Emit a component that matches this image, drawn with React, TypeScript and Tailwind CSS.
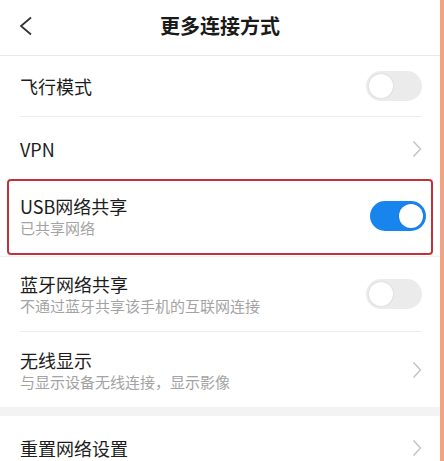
import React, { useState } from 'react';

const font = { fontFamily: '"Noto Sans CJK SC", "Noto Sans", sans-serif' };

interface ToggleProps {
  on: boolean;
  onChange: () => void;
}

const Toggle: React.FC<ToggleProps> = ({ on, onChange }) => (
  <button
    onClick={onChange}
    className={`relative h-[30px] w-[56px] shrink-0 rounded-full transition-colors ${on ? 'bg-[#1884ee]' : 'bg-[#ebebeb]'}`}
  >
    <span
      className={`absolute top-[3px] h-[24px] w-[24px] rounded-full bg-white shadow-[0_0_2px_rgba(0,0,0,0.15)] transition-all ${on ? 'left-[29px]' : 'left-[3px]'}`}
    />
  </button>
);

const Chevron = () => (
  <svg width="10" height="18" viewBox="0 0 10 18" className="shrink-0">
    <polyline points="1.5,1.5 8.5,9 1.5,16.5" fill="none" stroke="#c2c2c2" strokeWidth="1.4" />
  </svg>
);

interface RowProps {
  title: string;
  sub?: string;
  right: React.ReactNode;
  className?: string;
}

const Row: React.FC<RowProps> = ({ title, sub, right, className = '' }) => (
  <div className={`flex shrink-0 items-center justify-between ${className}`}>
    <div className="flex flex-col">
      <span className="text-[18px] leading-[24px] text-[#1c1c1c]">{title}</span>
      {sub && <span className="text-[15px] leading-[20px] text-[#a3a3a3]">{sub}</span>}
    </div>
    {right}
  </div>
);

export default function App() {
  const [airplane, setAirplane] = useState(false);
  const [usb, setUsb] = useState(true);
  const [bt, setBt] = useState(false);

  return (
    <div className="flex h-[461px] w-[444px] overflow-hidden bg-white" style={font}>
      <div className="flex flex-1 flex-col">
        {/* Header */}
        <div className="grid h-[56px] shrink-0 grid-cols-[60px_1fr_60px] items-center border-b border-[#e9e9e9] pb-[3px]">
          <svg width="14" height="20" viewBox="0 0 14 20" className="ml-[19px]">
            <polyline points="12,1.5 2,10 12,18.5" fill="none" stroke="#333" strokeWidth="1.8" />
          </svg>
          <h1 className="text-center text-[20px] font-bold text-[#1a1a1a]">更多连接方式</h1>
          <span />
        </div>

        <div className="shrink-0 pl-[20px] pr-[18px]">
          <Row
            title="飞行模式"
            className="h-[61px] border-b border-[#ececec]"
            right={<Toggle on={airplane} onChange={() => setAirplane(!airplane)} />}
          />
          <Row title="VPN" className="h-[62px] pt-[1px]" right={<Chevron />} />
        </div>

        {/* Highlighted USB tethering row */}
        <div className="mx-[7px] mb-[1px] flex h-[76px] shrink-0 items-center justify-between rounded-[4px] border-2 border-[#c3313b] pl-[11px] pr-[5px] pb-[2px]">
          <div className="flex flex-col">
            <span className="text-[18px] leading-[24px] text-[#1c1c1c]">USB网络共享</span>
            <span className="text-[15px] leading-[20px] text-[#a3a3a3]">已共享网络</span>
          </div>
          <Toggle on={usb} onChange={() => setUsb(!usb)} />
        </div>

        <div className="shrink-0 border-t border-[#f0f0f0] pl-[20px] pr-[18px]">
          <Row
            title="蓝牙网络共享"
            sub="不通过蓝牙共享该手机的互联网连接"
            className="h-[75px] border-b border-[#ececec]"
            right={<Toggle on={bt} onChange={() => setBt(!bt)} />}
          />
          <Row
            title="无线显示"
            sub="与显示设备无线连接，显示影像"
            className="h-[75px]"
            right={<Chevron />}
          />
        </div>

        <div className="h-[9px] shrink-0 bg-[#f3f3f3]" />

        <div className="shrink-0 pl-[20px] pr-[18px]">
          <Row title="重置网络设置" className="h-[64px]" right={<Chevron />} />
        </div>
      </div>
      <div className="w-[4px] shrink-0 bg-[#f0a486]" />
    </div>
  );
}
